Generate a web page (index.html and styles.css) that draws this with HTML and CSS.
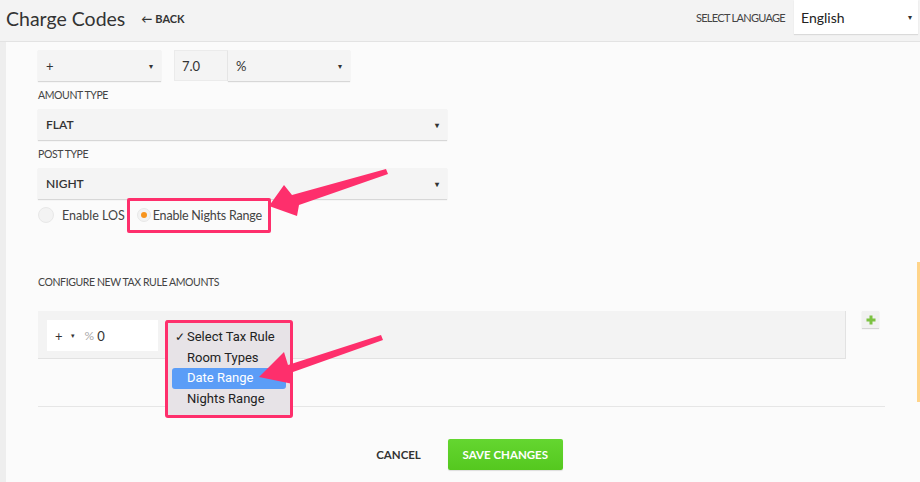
FILE: index.html
```html
<!DOCTYPE html>
<html>
<head>
<meta charset="utf-8">
<link rel="stylesheet" href="styles.css">
</head>
<body>
<div class="page">
  <header class="header">
    <h1 class="title">Charge Codes</h1>
    <a class="back"><span class="back-arrow">&#8592;</span>BACK</a>
    <div class="spacer"></div>
    <span class="lang-label">SELECT LANGUAGE</span>
    <div class="lang-select"><span>English</span><span class="caret">&#9662;</span></div>
  </header>
  <main class="main">
    <div class="row-first">
      <div class="select sel-op"><span>+</span><span class="caret">&#9662;</span></div>
      <div class="amount-group">
        <div class="amount-input">7.0</div>
        <div class="select sel-unit"><span>%</span><span class="caret">&#9662;</span></div>
      </div>
    </div>
    <div class="label">AMOUNT TYPE</div>
    <div class="select sel-wide"><span>FLAT</span><span class="caret">&#9662;</span></div>
    <div class="label">POST TYPE</div>
    <div class="select sel-wide"><span>NIGHT</span><span class="caret">&#9662;</span></div>
    <div class="radio-row">
      <label class="radio-item"><span class="radio"></span>Enable LOS</label>
      <label class="radio-item second"><span class="radio checked"></span>Enable Nights Range</label>
    </div>
    <div class="label section-label">CONFIGURE NEW TAX RULE AMOUNTS</div>
    <div class="tax-line">
      <div class="tax-row">
        <div class="tax-input">
          <span class="op">+</span><span class="op-caret">&#9662;</span>
          <span class="pct">%</span><span class="val">0</span>
        </div>
        <div class="rule-select"></div>
        <div class="menu">
          <div class="menu-item"><span class="check">&#10003;</span>Select Tax Rule</div>
          <div class="menu-item">Room Types</div>
          <div class="menu-item active">Date Range</div>
          <div class="menu-item">Nights Range</div>
        </div>
      </div>
      <div class="add-btn">
        <svg width="10" height="10" viewBox="0 0 10 10"><path d="M5 0.5V9.5M0.5 5H9.5" stroke="#7cc242" stroke-width="3"/></svg>
      </div>
    </div>
    <div class="separator"></div>
    <div class="actions">
      <button class="btn-cancel">CANCEL</button>
      <button class="btn-save">SAVE CHANGES</button>
    </div>
  </main>
  <div class="scroll-mark"></div>
  <div class="hl-box hl-radio"></div>
  <svg class="arrows" width="920" height="482" viewBox="0 0 920 482">
    <polygon fill="#fe2f6c" points="386,169 388,174 299,205 297,216 269,206 284,185 292,195"/>
    <polygon fill="#fe2f6c" points="381,335 383,340 293,372 293,384 259,377 284,352 288,365"/>
  </svg>
</div>
</body>
</html>
```
FILE: styles.css
```css
* { box-sizing: border-box; }
html, body { margin: 0; padding: 0; }
body {
  width: 920px;
  height: 482px;
  overflow: hidden;
  background: #eeeeee;
  font-family: "Lato", "Open Sans", sans-serif;
  color: #333;
}
.page { position: relative; width: 920px; height: 482px; }

.header {
  height: 42px;
  display: flex;
  align-items: flex-start;
  background: #f3f3f3;
  border-bottom: 1px solid #e3e3e3;
}
.title {
  margin: 0;
  padding: 7px 0 0 6px;
  font-size: 19.5px;
  font-weight: 400;
  color: #333;
  line-height: 24px;
}
.back {
  margin: 12px 0 0 16px;
  font-size: 11px;
  font-weight: 700;
  line-height: 14px;
  color: #333;
  display: flex;
  align-items: center;
}
.back-arrow { font-size: 11px; margin-right: 3px; }
.spacer { flex: 1; }
.lang-label {
  margin-top: 11px;
  font-size: 11px;
  line-height: 14px;
  color: #444;
  letter-spacing: -0.7px;
}
.lang-select {
  margin-left: 9px;
  width: 124px;
  height: 34px;
  background: #fff;
  box-shadow: 0 1px 1px rgba(0,0,0,0.1);
  display: flex;
  align-items: center;
  justify-content: space-between;
  padding: 0 6px 0 7px;
  font-size: 14px;
  color: #222;
  margin-right: 2px;
}
.caret { font-size: 8px; color: #333; }

.main {
  margin-left: 6px;
  height: 440px;
  background: #fbfbfb;
  padding: 8px 0 0 32px;
}
.row-first { display: flex; gap: 13px; }
.select {
  height: 31px;
  background: #f4f4f4;
  box-shadow: 0 1px 1px rgba(0,0,0,0.14);
  display: flex;
  align-items: center;
  justify-content: space-between;
  padding: 0 8px;
  font-size: 13px;
  color: #333;
}
.sel-op { width: 123px; }
.amount-group { display: flex; }
.amount-input {
  width: 54px;
  height: 31px;
  background: #f4f4f4;
  border: 1px solid #ebebeb;
  display: flex;
  align-items: center;
  padding-left: 7px;
  font-size: 13px;
}
.sel-unit { width: 122px; }
.sel-wide { width: 409px; font-weight: 600; font-size: 12px; }
.label {
  font-size: 10.5px;
  line-height: 14px;
  margin: 7px 0;
  color: #444;
  letter-spacing: -0.4px;
}
.radio-row {
  display: flex;
  align-items: center;
  margin-top: 8px;
  height: 16px;
}
.radio-item {
  display: flex;
  align-items: center;
  font-size: 12.5px;
  color: #444;
}
.radio {
  width: 16px;
  height: 16px;
  border-radius: 50%;
  background: #f3f3f3;
  border: 1px solid #e8e8e8;
  margin-right: 8px;
  display: flex;
  align-items: center;
  justify-content: center;
}
.radio-item.second { margin-left: 12px; letter-spacing: -0.2px; }
.radio.checked { width: 14px; height: 14px; margin-right: 2px; }
.radio.checked::after {
  content: "";
  width: 6px;
  height: 6px;
  border-radius: 50%;
  background: #f7941d;
}
.section-label { margin-top: 52px; margin-bottom: 22px; }

.tax-line { display: flex; gap: 16px; align-items: flex-start; }
.tax-row {
  position: relative;
  width: 808px;
  height: 48px;
  background: #f3f3f3;
  border-right: 1px solid #e2e2e2;
  border-bottom: 1px solid #e2e2e2;
  display: flex;
  align-items: flex-start;
  padding: 9px 0 0 9px;
}
.tax-input {
  width: 111px;
  height: 31px;
  background: #fff;
  display: flex;
  align-items: center;
  padding-left: 8px;
  font-size: 13px;
}
.op { margin-right: 8px; color: #333; }
.op-caret { font-size: 7px; margin-right: 10px; }
.pct { color: #aaa; font-size: 12px; margin-right: 3px; }
.val { color: #333; }
.rule-select {
  margin-left: 8px;
  width: 120px;
  height: 31px;
  border: 1px dotted #c8d8a8;
}
.menu {
  position: absolute;
  left: 127px;
  top: 9px;
  width: 128px;
  height: 98px;
  background: #e7e3e7;
  border: 3px solid #fe2f6c;
  border-radius: 3px;
  padding: 4px 4px 0 4px;
  font-family: "Roboto", "Liberation Sans", sans-serif;
  font-size: 13px;
  color: #222;
  z-index: 3;
}
.menu-item {
  height: 20.7px;
  line-height: 20.7px;
  padding-left: 15px;
  position: relative;
  border-radius: 3px;
}
.menu-item .check { position: absolute; left: 3px; font-size: 12px; }
.menu-item.active { background: #5b9df7; color: #fff; }

.add-btn {
  width: 17px;
  height: 17px;
  background: #f1f1f1;
  box-shadow: 0 1px 1px rgba(0,0,0,0.15);
  display: flex;
  align-items: center;
  justify-content: center;
}
.separator {
  margin-top: 47px;
  width: 847px;
  height: 1px;
  background: #e6e6e6;
}
.actions {
  display: flex;
  justify-content: center;
  align-items: center;
  gap: 27px;
  width: 847px;
  margin-top: 32px;
  padding-left: 16px;
}
.btn-cancel {
  border: none;
  background: none;
  font-family: inherit;
  font-weight: 700;
  font-size: 11.5px;
  color: #333;
  padding: 0;
}
.btn-save {
  width: 115px;
  height: 31px;
  border: none;
  border-radius: 2px;
  background: linear-gradient(#64d630, #55c81f);
  color: #fff;
  font-family: inherit;
  font-weight: 700;
  font-size: 11.5px;
  box-shadow: 0 1px 1px rgba(0,0,0,0.12);
}

.scroll-mark {
  position: absolute;
  left: 917px;
  top: 262px;
  width: 3px;
  height: 140px;
  background: #ffd48a;
}
.hl-box {
  position: absolute;
  border: 3px solid #fe2f6c;
  border-radius: 2px;
  z-index: 4;
}
.hl-radio { left: 127px; top: 198px; width: 144px; height: 35px; }
.arrows { position: absolute; left: 0; top: 0; z-index: 5; pointer-events: none; }
```
